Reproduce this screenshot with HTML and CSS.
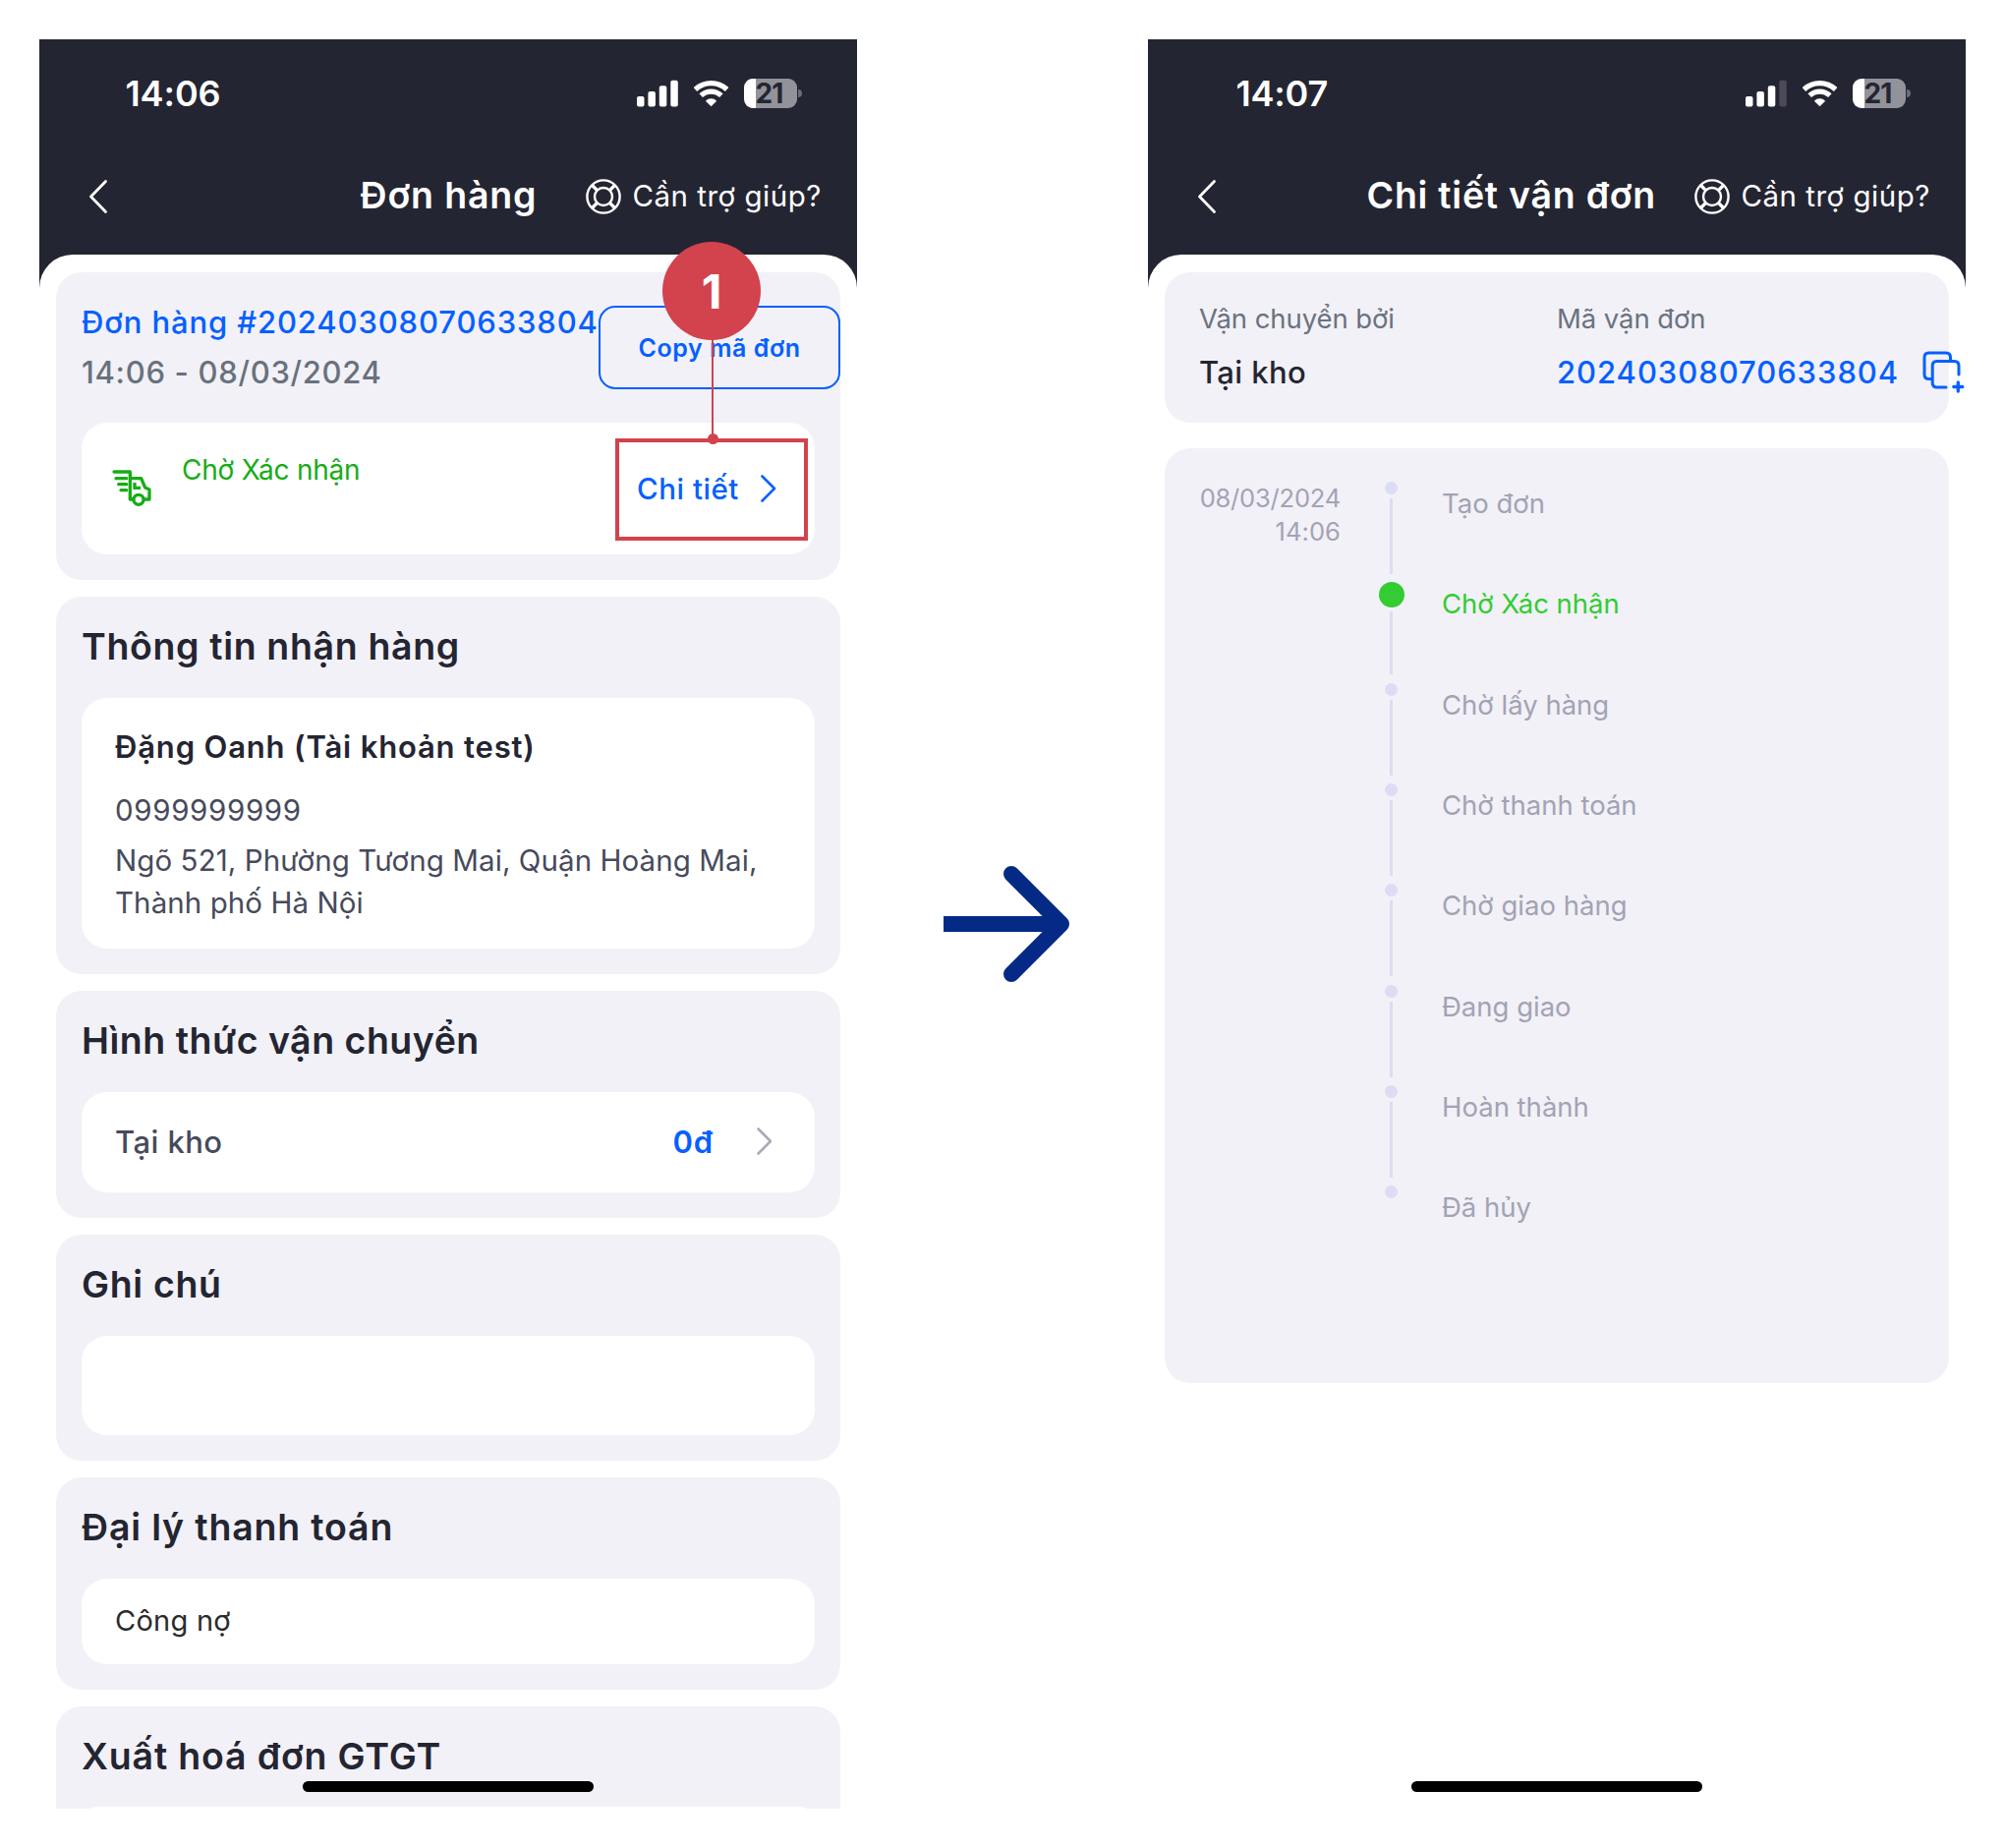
FILE: index.html
```html
<!DOCTYPE html>
<html lang="vi">
<head>
<meta charset="utf-8">
<title>Đơn hàng</title>
<link rel="stylesheet" href="styles.css">
</head>
<body>
<svg class="defs" width="0" height="0" aria-hidden="true">
  <symbol id="wifi" viewBox="738 150 106 90">
    <path d="M742.1 183.1A71 71 0 0 1 838.9 183.1" fill="none" stroke="#fff" stroke-width="16"/>
    <path d="M759.5 201.7A45.5 45.5 0 0 1 821.5 201.7" fill="none" stroke="#fff" stroke-width="15.500"/>
    <path d="M790.5 235L773.500 218A24 24 0 0 1 807.500 218Z" fill="#fff"/>
  </symbol>
  <symbol id="help" viewBox="0 0 36 36">
    <g fill="none" stroke="#fff" stroke-width="2.4">
      <circle cx="18" cy="18" r="16.6"/>
      <circle cx="18" cy="18" r="9"/>
      <path d="M6.500 6.500L11.600 11.600M29.500 6.500L24.400 11.600M6.500 29.500L11.600 24.400M29.500 29.500L24.400 24.400" stroke-width="3.400"/>
    </g>
  </symbol>
  <symbol id="back" viewBox="0 0 20 36">
    <path d="M17.5 2.5L2.5 18L17.5 33.500" fill="none" stroke="#fff" stroke-width="2.8" stroke-linecap="round" stroke-linejoin="round"/>
  </symbol>
  <symbol id="next" viewBox="0 0 18 30">
    <path d="M2.500 2.500L15 15L2.500 27.500" fill="none" stroke="currentColor" stroke-width="2.600" stroke-linecap="round" stroke-linejoin="round"/>
  </symbol>
</svg>
<main class="board">
  <section class="phone">
    <header class="top">
      <div class="status">
        <span class="time">14:06</span>
        <div class="signals">
          <svg class="bars" viewBox="0 0 42 30"><g fill="#fff"><rect x="0" y="18" width="7.500" height="10.500" rx="2"/><rect x="11.400" y="13" width="7.500" height="15.500" rx="2"/><rect x="22.800" y="7.300" width="7.500" height="21.200" rx="2"/><rect x="34.300" y="1.700" width="7.500" height="26.800" rx="2"/></g></svg>
          <svg class="wifi"><use href="#wifi"/></svg>
          <div class="battery"><span>21</span></div><i class="tip"></i>
        </div>
      </div>
      <nav class="nav">
        <svg class="back"><use href="#back"/></svg>
        <h1 class="title title-order">Đơn hàng</h1>
        <svg class="help-icon"><use href="#help"/></svg>
        <span class="help">Cần trợ giúp?</span>
      </nav>
    </header>
    <div class="sheet">
      <article class="card card-order">
        <div class="order">
          <div class="order-text">
            <p class="order-id">Đơn hàng #20240308070633804</p>
            <p class="order-date">14:06 - 08/03/2024</p>
          </div>
          <button class="copy">Copy mã đơn</button>
        </div>
        <div class="box state">
          <svg class="truck" viewBox="250 655 126 118"><g fill="none" stroke="#16ad16" stroke-width="10" stroke-linecap="round" stroke-linejoin="round"><path d="M259 664H308V748H317M265 684H297M273 702H297M280 720H297M308 684H342L354 712L367 718V748H351"/><circle cx="334" cy="749" r="15"/><path d="M322 697V713H340" stroke-linecap="butt" stroke-linejoin="miter"/></g></svg>
          <span class="state-name">Chờ Xác nhận</span>
          <a class="detail">Chi tiết</a>
          <svg class="next blue"><use href="#next"/></svg>
        </div>
      </article>
      <article class="card card-address">
        <h2>Thông tin nhận hàng</h2>
        <div class="box address">
          <p class="name">Đặng Oanh (Tài khoản test)</p>
          <p class="tel">0999999999</p>
          <p class="street">Ngõ 521, Phường Tương Mai, Quận Hoàng Mai,</p>
          <p class="street city">Thành phố Hà Nội</p>
        </div>
      </article>
      <article class="card card-ship">
        <h2 class="h-ship">Hình thức vận chuyển</h2>
        <div class="box ship">
          <span class="ship-name">Tại kho</span>
          <span class="fee">0đ</span>
          <svg class="next grey"><use href="#next"/></svg>
        </div>
      </article>
      <article class="card card-note">
        <h2>Ghi chú</h2>
        <div class="box"></div>
      </article>
      <article class="card card-pay">
        <h2 class="h-wide">Đại lý thanh toán</h2>
        <div class="box pay"><span class="debt">Công nợ</span></div>
      </article>
      <article class="card card-vat">
        <h2 class="h-wide">Xuất hoá đơn GTGT</h2>
        <div class="box"></div>
      </article>
    </div>
    <div class="home"></div>
    <div class="focus"></div>
    <div class="stem"></div>
    <div class="knob"></div>
    <div class="step-no">1</div>
  </section>

  <div class="between">
    <svg class="arrow" viewBox="0 0 128 118"><path d="M0 59H114" stroke="#052a86" stroke-width="16"/><path d="M69 8L120 59L69 110" fill="none" stroke="#052a86" stroke-width="16" stroke-linecap="round" stroke-linejoin="round"/></svg>
  </div>

  <section class="phone">
    <header class="top">
      <div class="status">
        <span class="time time-late">14:07</span>
        <div class="signals">
          <svg class="bars" viewBox="0 0 42 30"><g fill="#fff"><rect x="0" y="18" width="7.500" height="10.500" rx="2"/><rect x="11.400" y="13" width="7.500" height="15.500" rx="2"/><rect x="22.800" y="7.300" width="7.500" height="21.200" rx="2"/><rect x="34.300" y="1.700" width="7.500" height="26.800" rx="2" fill="#4b4b57"/></g></svg>
          <svg class="wifi"><use href="#wifi"/></svg>
          <div class="battery"><span>21</span></div><i class="tip"></i>
        </div>
      </div>
      <nav class="nav">
        <svg class="back"><use href="#back"/></svg>
        <h1 class="title title-track">Chi tiết vận đơn</h1>
        <svg class="help-icon"><use href="#help"/></svg>
        <span class="help">Cần trợ giúp?</span>
      </nav>
    </header>
    <div class="sheet sheet-track">
      <article class="card card-carrier">
        <div class="carrier">
          <p class="label">Vận chuyển bởi</p>
          <p class="value">Tại kho</p>
        </div>
        <div class="code">
          <p class="label">Mã vận đơn</p>
          <div class="code-row">
            <span class="code-no">20240308070633804</span>
            <svg class="copy-icon" viewBox="0 0 44 44"><g fill="none" stroke="#0560ff" stroke-width="3" stroke-linecap="round" stroke-linejoin="round"><path d="M10 28.500H7.500Q3 28.500 3 24V6.500Q3 2 7.500 2H25Q29.500 2 29.500 6.500V10.500"/><path d="M25 37H15.700Q11.200 37 11.200 32.500V15Q11.200 10.500 15.700 10.500H33.500Q38 10.500 38 15V24"/><path d="M37.300 32V41M32.800 36.500H41.800" stroke-width="3.300"/></g></svg>
          </div>
        </div>
      </article>
      <article class="card card-steps">
        <div class="when"><span class="when-d">08/03/2024</span><span class="when-t">14:06</span></div>
        <ol class="steps">
          <li>Tạo đơn</li>
          <li class="now">Chờ Xác nhận</li>
          <li>Chờ lấy hàng</li>
          <li>Chờ thanh toán</li>
          <li>Chờ giao hàng</li>
          <li>Đang giao</li>
          <li>Hoàn thành</li>
          <li>Đã hủy</li>
        </ol>
      </article>
    </div>
    <div class="home"></div>
  </section>
</main>
</body>
</html>
```
FILE: styles.css
```css
* { box-sizing: border-box; margin: 0; padding: 0; }
body { background: #fff; font-family: Inter, "Noto Sans", sans-serif; color: #242532; white-space: nowrap; }
.defs { position: absolute; }
svg { display: block; flex: none; }
.board { display: flex; width: 2040px; height: 1880px; padding: 40px; }
.phone { position: relative; width: 832px; height: 1800px; overflow: hidden; display: flex; flex-direction: column; flex: none; }
.top { height: 253px; flex: none; background: #242532; color: #fff; }
.status { display: flex; height: 110px; align-items: center; justify-content: space-between; padding: 0 56px 0 87.5px; }
.time { font-size: 36px; font-weight: 600; line-height: 44px; letter-spacing: -.1px; }
.time-late { margin-left: 2px; letter-spacing: -.2px; }
.signals { display: flex; align-items: center; }
.bars { width: 42px; height: 30px; }
.wifi { width: 35.4px; height: 30px; margin: 0 15.5px 0 16px; }
.battery { width: 54px; height: 30px; border-radius: 9px; background: linear-gradient(90deg, #fff 12px, #92929a 12px); padding-left: 11.5px; }
.battery span { display: block; font-size: 28px; font-weight: 700; line-height: 30px; color: #242532; letter-spacing: -1px; }
.tip { width: 4px; height: 8px; margin-left: 1px; border-radius: 0 4px 4px 0; background: #6c6c76; }
.nav { display: flex; height: 99px; align-items: center; padding-left: 49.5px; }
.back { width: 20px; height: 36px; }
.title { font-size: 37.5px; font-weight: 600; line-height: 44px; letter-spacing: .85px; }
.title-order { width: 232px; margin: -1px -2.5px 0 257px; }
.title-track { width: 332px; margin: -1px 1.5px 0 153px; letter-spacing: .75px; }
.help-icon { width: 36px; height: 36px; }
.help { margin: -1px 0 0 11.5px; font-size: 29.5px; line-height: 36px; letter-spacing: .5px; }
.sheet { flex: 1; margin-top: -34px; padding: 18px 17px 0; background: #fff; border-radius: 34px 34px 0 0; display: flex; flex-direction: column; gap: 17px; }
.card { flex: none; border-radius: 26px; background: #f2f1f7; padding: 0 26px 26px; display: flex; flex-direction: column; }
.box { flex: 1; background: #fff; border-radius: 26px; }
.card h2 { height: 102.5px; font-size: 37.5px; font-weight: 600; line-height: 101px; letter-spacing: .65px; }
.card .h-ship { letter-spacing: .5px; }
.card .h-wide { letter-spacing: .82px; }
.card-order { height: 313px; }
.order { display: flex; height: 153px; margin-right: -26px; padding-top: 25px; }
.order-text { width: 526px; }
.order-text p { font-size: 31px; font-weight: 500; line-height: 51px; }
.order-id { color: #0560ff; letter-spacing: .88px; }
.order-date { color: #69717d; letter-spacing: .7px; }
.copy { width: 246px; height: 85px; margin-top: 9px; border: 2px solid #0560ff; border-radius: 17px; background: none; color: #0560ff; font: 600 25px/32px Inter, sans-serif; letter-spacing: .55px; }
.state { display: flex; align-items: center; padding-left: 30px; }
.truck { width: 42px; height: 39.3px; }
.state-name { width: 463px; margin: -39px 0 0 30px; font-size: 28px; line-height: 36px; color: #16ad16; letter-spacing: -.22px; }
.detail { width: 125px; font-size: 29.5px; font-weight: 500; line-height: 36px; color: #0560ff; letter-spacing: .55px; }
.next { width: 18px; height: 30px; }
.blue { color: #0560ff; }
.grey { color: #a9a9b8; }
.card-address { height: 384px; }
.address { padding: 27px 34px 0; color: #474a5c; }
.name { font-size: 31px; font-weight: 600; line-height: 46px; color: #242532; letter-spacing: .83px; }
.tel { margin-top: 20px; font-size: 29.5px; line-height: 43px; letter-spacing: .65px; }
.street { margin-top: 8px; font-size: 29.5px; line-height: 43px; letter-spacing: .08px; }
.city { margin-top: 0; }
.card-ship { height: 231px; }
.ship { display: flex; align-items: center; padding: 0 0 1px 34px; font-size: 31px; }
.ship-name { width: 567.5px; font-weight: 500; color: #474a5c; letter-spacing: .45px; }
.fee { width: 84.5px; font-weight: 600; color: #0560ff; letter-spacing: .7px; }
.card-note { height: 230px; }
.card-pay { height: 215.5px; }
.pay { display: flex; align-items: center; padding: 0 0 2px 34px; font-size: 29px; color: #2b2b2b; letter-spacing: .25px; }
.card-vat { height: 160px; }
.home { position: absolute; left: 268px; top: 1772px; width: 296px; height: 11px; border-radius: 6px; background: #000; }
.focus { position: absolute; left: 586px; top: 406px; width: 196px; height: 104px; border: 4px solid #d2434d; }
.stem { position: absolute; left: 684px; top: 300px; width: 2px; height: 106px; background: #d2434d; }
.knob { position: absolute; left: 679.5px; top: 400.5px; width: 11px; height: 11px; border-radius: 50%; background: #d2434d; }
.step-no { position: absolute; left: 634px; top: 206px; width: 100px; height: 100px; border-radius: 50%; background: #d2434d; color: #fff; font-size: 48px; font-weight: 700; line-height: 101px; text-align: center; }
.between { width: 296px; display: flex; align-items: center; padding-left: 88px; flex: none; }
.arrow { width: 128px; height: 118px; }
.sheet-track { gap: 26px; }
.card-carrier { height: 153px; flex-direction: row; padding: 25px 0 0 35px; }
.carrier { width: 364px; flex: none; }
.code { flex: none; }
.label { font-size: 27.5px; line-height: 44px; color: #6b7280; letter-spacing: -.08px; }
.value, .code-no { font-size: 31px; font-weight: 500; line-height: 44px; }
.value { margin-top: 11px; letter-spacing: .4px; }
.code-row { display: flex; margin-top: 11px; color: #0560ff; }
.code-no { width: 371px; letter-spacing: .95px; }
.copy-icon { width: 44px; height: 44px; }
.card-steps { height: 951px; flex-direction: row; padding: 33px 0 0 35px; color: #a2a3b5; }
.when { display: flex; flex-direction: column; align-items: flex-end; width: 144px; flex: none; font-size: 25.5px; line-height: 34.2px; letter-spacing: .1px; padding-top: .5px; }
.when-d { letter-spacing: -.2px; }
.steps { list-style: none; margin-left: 45px; }
.steps li { position: relative; height: 102.35px; padding: 6px 0 0 58px; font-size: 27.5px; line-height: 34px; letter-spacing: 0; }
.steps li::before { content: ""; position: absolute; left: 0; top: 1px; width: 13px; height: 13px; border-radius: 50%; background: #dcdcf2; }
.steps li::after { content: ""; position: absolute; left: 5px; top: 18px; width: 3px; height: 77px; background: #dcdcf2; }
.steps li:last-child::after { content: none; }
.steps .now { color: #33cc33; }
.steps .now::before { left: -6.5px; top: 1px; width: 26px; height: 26px; background: #33cc33; }
.steps .now::after { top: 31px; height: 64px; }
```
